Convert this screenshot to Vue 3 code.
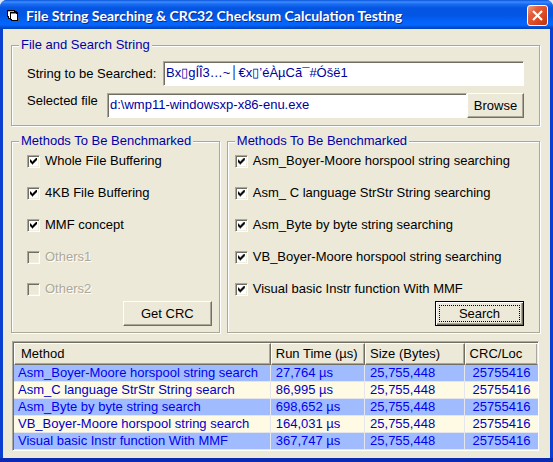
<script setup>
import { ref, reactive } from 'vue'

const searchString = ref('Bx▯gÍÎ3…~│€x▯’éÀµCã¯#Óšë1')
const selectedFile = ref('d:\\wmp11-windowsxp-x86-enu.exe')

const fileMethods = reactive([
  { id: 'whole', label: 'Whole File Buffering', checked: true },
  { id: 'four-kb', label: '4KB File Buffering', checked: true },
  { id: 'mmf', label: 'MMF concept', checked: true },
  { id: 'others1', label: 'Others1', checked: false, disabled: true },
  { id: 'others2', label: 'Others2', checked: false, disabled: true },
])

const searchMethods = reactive([
  { id: 'asm-bm', label: 'Asm_Boyer-Moore horspool string searching', checked: true },
  { id: 'asm-strstr', label: 'Asm_ C language StrStr String searching', checked: true },
  { id: 'asm-byte', label: 'Asm_Byte by byte string searching', checked: true },
  { id: 'vb-bm', label: 'VB_Boyer-Moore horspool string searching', checked: true },
  { id: 'vb-instr', label: 'Visual basic Instr function With MMF', checked: true },
])

const results = [
  { method: 'Asm_Boyer-Moore horspool string search', time: '27,764 µs' },
  { method: 'Asm_C language StrStr String search', time: '86,995 µs' },
  { method: 'Asm_Byte by byte string search', time: '698,652 µs' },
  { method: 'VB_Boyer-Moore horspool string search', time: '164,031 µs' },
  { method: 'Visual basic Instr function With MMF', time: '367,747 µs' },
]
</script>

<template>
  <main class="window">
    <header class="titlebar">
      <svg class="app-icon" viewBox="0 0 16 16" shape-rendering="crispEdges" aria-hidden="true">
        <path d="M12 9h1v1h1v3h-2z" fill="#555a60" />
        <path d="M1 2h8v1h2v1h1v9H5v-1H4v-1H2V9H1z" fill="#000" />
        <path d="M2 3h6v1H4v6H3V8H2z" fill="#fff" />
        <path d="M2 3h6v1H2z" fill="#5fd4e0" />
        <path d="M5 5h5v1h1v6H6v-1H5z" fill="#fff" />
        <path d="M5 5h5v1H5z" fill="#28b4c8" />
      </svg>
      <h1 class="title">File String Searching &amp; CRC32 Checksum Calculation Testing</h1>
      <button class="close" type="button" aria-label="Close">
        <svg viewBox="0 0 11 11" aria-hidden="true">
          <path d="M1 1l9 9M10 1l-9 9" stroke="#fff" stroke-width="2.2" />
        </svg>
      </button>
    </header>

    <div class="client">
      <fieldset class="frame source">
        <legend>File and Search String</legend>
        <div class="row">
          <label class="long" for="search-string">String to be Searched:</label>
          <input id="search-string" v-model="searchString" class="text" type="text" />
        </div>
        <div class="row file-row">
          <label class="short" for="selected-file">Selected file</label>
          <input id="selected-file" v-model="selectedFile" class="text" type="text" />
          <button class="button browse" type="button">Browse</button>
        </div>
      </fieldset>

      <div class="methods">
        <fieldset class="frame files">
          <legend>Methods To Be Benchmarked</legend>
          <div class="options">
            <div v-for="m in fileMethods" :key="m.id" class="option">
              <input :id="m.id" v-model="m.checked" type="checkbox" :disabled="m.disabled" />
              <label :for="m.id">{{ m.label }}</label>
            </div>
          </div>
          <div class="actions">
            <button class="button" type="button">Get CRC</button>
          </div>
        </fieldset>

        <fieldset class="frame searches">
          <legend>Methods To Be Benchmarked</legend>
          <div class="options">
            <div v-for="m in searchMethods" :key="m.id" class="option">
              <input :id="m.id" v-model="m.checked" type="checkbox" />
              <label :for="m.id">{{ m.label }}</label>
            </div>
          </div>
          <div class="actions">
            <button class="button default" type="button"><span>Search</span></button>
          </div>
        </fieldset>
      </div>

      <div class="grid">
        <table>
          <colgroup>
            <col class="c-method" />
            <col class="c-time" />
            <col class="c-size" />
            <col />
          </colgroup>
          <thead>
            <tr>
              <th scope="col">Method</th>
              <th scope="col">Run Time (µs)</th>
              <th scope="col">Size (Bytes)</th>
              <th scope="col">CRC/Loc</th>
            </tr>
          </thead>
          <tbody>
            <tr v-for="r in results" :key="r.method">
              <td>{{ r.method }}</td>
              <td>{{ r.time }}</td>
              <td>25,755,448</td>
              <td>25755416</td>
            </tr>
          </tbody>
        </table>
      </div>
    </div>
  </main>
</template>

<style>
body {
  background: #dfe9f5;
}
</style>

<style scoped>
.window {
  box-sizing: border-box;
  overflow: hidden;
  border-bottom: 4px solid #0a2ab4;
  border-radius: 7px 7px 0 0;
  background: #0a3fd0;
  color: #000;
  font: 13px/16px "Liberation Sans", Arial, sans-serif;
}

.titlebar {
  display: flex;
  align-items: center;
  box-sizing: border-box;
  height: 29px;
  padding: 2px 5px 0 6px;
  background: linear-gradient(
    #0a53d8 0,
    #3c8cff 2px,
    #1a6cf2 4px,
    #0456e2 8px,
    #0355e3 15px,
    #0364fb 22px,
    #0466fd 25px,
    #0250d8 27px,
    #0142b8 29px
  );
}

.app-icon {
  width: 16px;
  height: 16px;
}

.title {
  flex: 1;
  margin: 0 0 0 4px;
  overflow: hidden;
  color: #fff;
  font: bold 14px/18px "Trebuchet MS", Lato, sans-serif;
  text-shadow: 1px 1px 0 #0a2a90;
  white-space: nowrap;
}

.close {
  display: flex;
  align-items: center;
  justify-content: center;
  width: 21px;
  height: 21px;
  padding: 0;
  border: 1px solid #fff;
  border-radius: 3px;
  background: linear-gradient(135deg, #f0a088 0, #e2603c 30%, #d8441c 70%, #b8360f 100%);
}

.close svg {
  width: 11px;
  height: 11px;
}

.client {
  padding: 8px 10px 7px 8px;
  margin: 0 3px;
  background: #ece9d8;
}

.frame {
  min-width: 0;
  margin: 0;
  padding: 8px 15px 7px;
  border: 1px solid #aca899;
  box-shadow: 1px 1px 0 #fff, inset 1px 1px 0 #fff;
}

.frame legend {
  margin-left: -8px;
  padding: 0 2px;
  background: #ece9d8;
  color: #0000a8;
}

.row {
  display: flex;
  align-items: center;
}

.row label {
  white-space: nowrap;
}

.file-row {
  align-items: flex-start;
  margin-top: 7px;
}

.long {
  width: 136px;
}

.short {
  width: 80px;
}

.text {
  flex: 1;
  min-width: 0;
  box-sizing: border-box;
  height: 25px;
  padding: 0 2px 2px;
  border: 1px solid;
  border-color: #aca899 #fff #fff #aca899;
  box-shadow: inset 1px 1px 0 #716f64;
  background: #fff;
  color: #0000a0;
  font: inherit;
  outline: none;
}

.button {
  box-sizing: border-box;
  width: 89px;
  height: 25px;
  padding: 0;
  border: 1px solid;
  border-color: #fff #716f64 #716f64 #fff;
  box-shadow: inset -1px -1px 0 #aca899;
  background: #ece9d8;
  color: #000;
  font: inherit;
}

.browse {
  width: 57px;
}

.default {
  padding: 3px;
  border-color: #000;
  box-shadow: inset 1px 1px 0 #fff, inset -1px -1px 0 #716f64, inset -2px -2px 0 #aca899;
}

.default span {
  display: block;
  border: 1px dotted #000;
  line-height: 15px;
}

.methods {
  display: grid;
  grid-template-columns: 2fr 3fr;
  gap: 7px;
  margin-top: 7px;
}

.files {
  padding: 4px 7px 6px 15px;
}

.searches {
  padding: 4px 15px 6px 7px;
}

.searches legend {
  margin-left: 0;
}

.options {
  display: grid;
  gap: 16px;
}

.option {
  display: flex;
  align-items: center;
  gap: 5px;
}

.option input {
  appearance: none;
  flex: none;
  box-sizing: border-box;
  width: 13px;
  height: 13px;
  margin: 0;
  padding: 2px;
  border: 1px solid;
  border-color: #aca899 #fff #fff #aca899;
  box-shadow: inset 1px 1px 0 #716f64, inset -1px -1px 0 #f1efe2;
  background: #fff;
}

.option input:checked::before {
  content: "";
  display: block;
  width: 7px;
  height: 7px;
  background: #000;
  clip-path: polygon(0 2px, 1px 2px, 1px 3px, 2px 3px, 2px 4px, 3px 4px, 3px 3px, 4px 3px, 4px 2px, 5px 2px, 5px 1px, 6px 1px, 6px 0, 7px 0, 7px 3px, 6px 3px, 6px 4px, 5px 4px, 5px 5px, 4px 5px, 4px 6px, 3px 6px, 3px 7px, 2px 7px, 2px 6px, 1px 6px, 1px 5px, 0 5px);
}

.option input:disabled {
  background: #ece9d8;
}

.option input:disabled + label {
  color: #aca899;
  text-shadow: 1px 1px 0 #fff;
}

.actions {
  display: flex;
  justify-content: flex-end;
  margin-top: 4px;
}

.grid {
  margin: 8px 1px 0;
  border: 1px solid;
  border-color: #aca899 #fff #fff #aca899;
}

table {
  width: 100%;
  table-layout: fixed;
  border: 0 solid #716f64;
  border-width: 1px 0 0 1px;
  border-spacing: 0;
}

.c-method {
  width: 49%;
}

.c-time {
  width: 18%;
}

.c-size {
  width: 19%;
}

th,
td {
  overflow: hidden;
  padding: 0 5px;
  text-align: left;
  font-weight: normal;
  white-space: nowrap;
}

th {
  height: 20px;
  padding-left: 4px;
  border: 1px solid;
  border-color: #fff #716f64 #716f64 #fff;
  box-shadow: inset -1px -1px 0 #aca899;
}

th:first-child {
  padding-left: 6px;
}

th:last-child {
  border-right-color: #ece9d8;
}

td {
  height: 16px;
  border: 0 solid #e4e6ec;
  border-width: 0 1px 1px 0;
  background: #a0bcff;
  color: #0000f0;
}

td:first-child {
  padding-left: 4px;
}

td:last-child {
  padding-left: 8px;
  border-right: 0;
}

tbody tr:nth-child(even) td {
  background: #fffae4;
  color: #0000c8;
}
</style>
